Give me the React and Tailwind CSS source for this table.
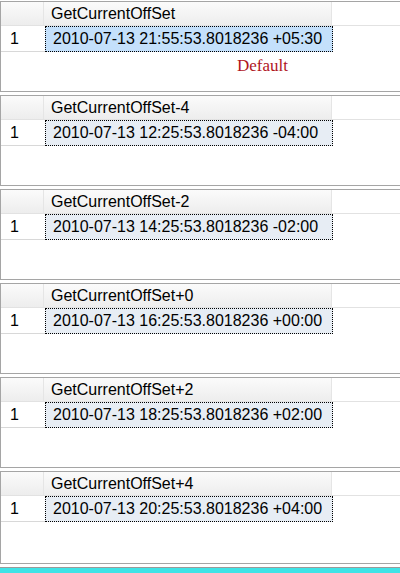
import React from 'react';

const results = [
  { name: 'GetCurrentOffSet', value: '2010-07-13 21:55:53.8018236 +05:30', active: true },
  { name: 'GetCurrentOffSet-4', value: '2010-07-13 12:25:53.8018236 -04:00' },
  { name: 'GetCurrentOffSet-2', value: '2010-07-13 14:25:53.8018236 -02:00' },
  { name: 'GetCurrentOffSet+0', value: '2010-07-13 16:25:53.8018236 +00:00' },
  { name: 'GetCurrentOffSet+2', value: '2010-07-13 18:25:53.8018236 +02:00' },
  { name: 'GetCurrentOffSet+4', value: '2010-07-13 20:25:53.8018236 +04:00', last: true },
];

const ResultGrid = ({ name, value, active, last }) => {
  return (
    <div
      className={`${last ? 'h-[93px]' : 'h-[91px]'} border-t border-l border-b border-[#a5a5a5] bg-white flex flex-col`}
    >
      {/* Header row */}
      <div className="flex h-[24px] border-b border-[#e2e2e2]">
        <div className="w-[43px] border-r border-[#e5e5e5] bg-gradient-to-b from-[#fbfbfb] to-[#ededed]" />
        <div className="w-[288px] border-r border-[#e5e5e5] bg-gradient-to-b from-[#fbfbfb] to-[#ededed] pl-[7px] leading-[23px] text-[16px] text-black">
          {name}
        </div>
      </div>

      {/* Data row */}
      <div className="flex h-[26px]">
        <div className="w-[44px] border-b border-[#d8d8d8] pl-[9px] leading-[25px] text-[16px] text-black">1</div>
        <div
          className={`w-[288px] border border-dotted border-black pl-[7px] leading-[23px] text-[16px] text-black ${
            active ? 'bg-[#c4e0fb]' : 'bg-[#e7edf4]'
          }`}
        >
          {value}
        </div>
      </div>

      {active && (
        <div className="pl-[236px] pt-[4px] text-[17px] leading-[20px] text-[#b0161e] font-['Liberation_Serif',serif]">
          Default
        </div>
      )}
    </div>
  );
};

const App = () => {
  return (
    <div className="w-[400px] h-[573px] bg-white overflow-hidden font-['Liberation_Sans',Arial,sans-serif] flex flex-col">
      <div className="pt-[1px] flex flex-col gap-[3px]">
        {results.map((r) => (
          <ResultGrid key={r.name} {...r} />
        ))}
      </div>
      <div className="mt-auto h-[6px] border-t border-[#9a9a9a] bg-[#3fe3e6]" />
    </div>
  );
};

export default App;
